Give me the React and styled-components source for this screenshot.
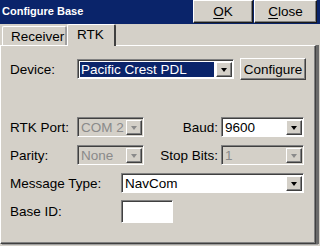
import React from 'react'
import styled, { createGlobalStyle } from 'styled-components'

const Global = createGlobalStyle`
  html, body {
    margin: 0;
    padding: 0;
    background: #d4d0c8;
  }
  body {
    font-family: "Liberation Sans", Arial, sans-serif;
    font-size: 13px;
    color: #000;
  }
`

const Window = styled.div`
  width: 320px;
  height: 246px;
  display: flex;
  flex-direction: column;
  background: #d4d0c8; /* dialog gray */
  overflow: hidden;
`

const TitleBar = styled.div`
  height: 24px;
  display: flex;
  align-items: flex-start;
  background: #0a246a; /* navy */
  padding-right: 3px;
`

const Title = styled.div`
  flex: 1;
  padding: 5px 0 0 2px;
  color: #fff;
  font-size: 11px;
  font-weight: bold;
`

const TitleButton = styled.button`
  width: ${(p) => p.$w}px;
  height: 23px;
  margin-left: ${(p) => p.$gap || 0}px;
  padding: 0;
  background: #d4d0c8;
  border: 1px solid;
  border-color: #fff #1a1a1a #1a1a1a #fff;
  box-shadow: inset -1px -1px #808080;
  font-family: inherit;
  font-size: 13.5px;
  color: #000;

  u {
    text-decoration: underline;
    text-underline-offset: 2px;
  }
`

const TabStrip = styled.div`
  height: 21px;
  display: flex;
  align-items: flex-end;
  padding-left: 2px;
`

const Tab = styled.div`
  position: relative;
  height: ${(p) => (p.$active ? 22 : 19)}px;
  margin-bottom: ${(p) => (p.$active ? -1 : 0)}px;
  padding: ${(p) => (p.$active ? '2px 0 0 9px' : '2px 0 0 8px')};
  width: ${(p) => p.$w}px;
  box-sizing: border-box;
  background: #d4d0c8;
  border-top: 1px solid #fff;
  border-left: 1px solid #fff;
  border-right: 2px solid;
  border-right-color: ${(p) => (p.$active ? '#404040' : '#a0a0a0')};
  border-radius: 2px 2px 0 0;
  font-size: 13.5px;
  z-index: ${(p) => (p.$active ? 2 : 1)};
`

const Panel = styled.div`
  flex: 1;
  display: flex;
  flex-direction: column;
  margin-right: 4px;
  margin-bottom: 2px;
  padding-left: 9px;
  border-top: 1px solid #fff;
  border-left: 1px solid #fff;
  border-right: 1px solid #404040;
  border-bottom: 1px solid #404040;
  box-shadow: inset -1px -1px #808080, 3px 0 0 #6a6a6a, 2px 1px 0 #a0a0a0;
`

const Row = styled.div`
  display: flex;
  align-items: center;
  height: ${(p) => p.$h || 20}px;
  margin-top: ${(p) => p.$top}px;
`

const Label = styled.div`
  width: ${(p) => p.$w}px;
  font-size: 13.5px;
  white-space: nowrap;
  text-align: ${(p) => (p.$right ? 'right' : 'left')};
  padding-right: ${(p) => (p.$right ? 3 : 0)}px;
  box-sizing: border-box;
`

const Combo = styled.div`
  width: ${(p) => p.$w}px;
  height: 20px;
  box-sizing: border-box;
  display: flex;
  border: 1px solid;
  border-color: #808080 #fff #fff #808080;
  box-shadow: inset 1px 1px #404040;
  background: ${(p) => (p.$disabled ? '#d4d0c8' : '#fff')};
  padding: 2px 1px 1px 2px;
`

const ComboText = styled.div`
  flex: 1;
  display: flex;
  align-items: center;
  padding-left: 1px;
  margin-right: 2px;
  font-size: 13.5px;
  color: ${(p) => (p.$disabled ? '#8a8a8a' : p.$selected ? '#fff' : '#000')};
  background: ${(p) => (p.$selected ? '#0a246a' : 'transparent')};
  white-space: nowrap;
  overflow: hidden;
`

const Arrow = styled.div`
  width: 16px;
  box-sizing: border-box;
  display: flex;
  align-items: center;
  justify-content: center;
  background: #d4d0c8;
  border: 1px solid;
  border-color: #fff #404040 #404040 #fff;
  box-shadow: inset -1px -1px #808080;

  &::after {
    content: '';
    border-left: 3.5px solid transparent;
    border-right: 3.5px solid transparent;
    border-top: 4px solid ${(p) => (p.$disabled ? '#8a8a8a' : '#000')};
  }
`

const Button = styled.button`
  width: 66px;
  height: 22px;
  margin-left: 6px;
  padding: 0;
  background: #d4d0c8;
  border: 1px solid;
  border-color: #fff #404040 #404040 #fff;
  box-shadow: inset -1px -1px #808080;
  font-family: inherit;
  font-size: 13.5px;
  color: #000;
`

const TextBox = styled.div`
  width: 52px;
  height: 23px;
  box-sizing: border-box;
  background: #fff;
  border: 1px solid;
  border-color: #808080 #fff #fff #808080;
  box-shadow: inset 1px 1px #404040;
`

const Spacer = styled.div`
  flex: ${(p) => p.$flex || 'none'};
`

const ComboBox = ({ w, value, disabled, selected }) => (
  <Combo $w={w} $disabled={disabled}>
    <ComboText $disabled={disabled} $selected={selected}>{value}</ComboText>
    <Arrow $disabled={disabled} />
  </Combo>
)

const App = () => {
  return (
    <Window>
      <Global />
      <TitleBar>
        <Title>Configure Base</Title>
        <TitleButton $w={60}><u>O</u>K</TitleButton>
        <TitleButton $w={63} $gap={1}><u>C</u>lose</TitleButton>
      </TitleBar>
      <TabStrip>
        <Tab $w={65}>Receiver</Tab>
        <Tab $w={49} $active>RTK</Tab>
      </TabStrip>
      <Panel>
        <Row $top={12} $h={22}>
          <Label $w={67}>Device:</Label>
          <ComboBox w={157} value="Pacific Crest PDL" selected />
          <Button>Configure</Button>
        </Row>
        <Row $top={37}>
          <Label $w={67}>RTK Port:</Label>
          <ComboBox w={67} value="COM 2" disabled />
          <Label $w={77} $right>Baud:</Label>
          <ComboBox w={83} value="9600" />
        </Row>
        <Row $top={8}>
          <Label $w={67}>Parity:</Label>
          <ComboBox w={67} value="None" disabled />
          <Label $w={77} $right>Stop Bits:</Label>
          <ComboBox w={83} value="1" disabled />
        </Row>
        <Row $top={8}>
          <Label $w={111}>Message Type:</Label>
          <ComboBox w={183} value="NavCom" />
        </Row>
        <Row $top={7} $h={23}>
          <Label $w={111}>Base ID:</Label>
          <TextBox />
        </Row>
        <Spacer $flex={1} />
      </Panel>
    </Window>
  )
}

export default App
